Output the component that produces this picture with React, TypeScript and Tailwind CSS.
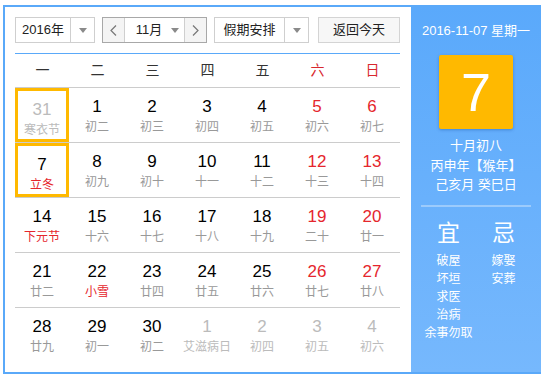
const font = "font-['Liberation_Sans','Noto_Sans_CJK_SC',sans-serif]";

type Day = { n: number; l: string; out?: boolean; fest?: boolean; sel?: boolean };

const rows: Day[][] = [
  [
    { n: 31, l: "寒衣节", out: true, sel: true },
    { n: 1, l: "初二" },
    { n: 2, l: "初三" },
    { n: 3, l: "初四" },
    { n: 4, l: "初五" },
    { n: 5, l: "初六" },
    { n: 6, l: "初七" },
  ],
  [
    { n: 7, l: "立冬", fest: true, sel: true },
    { n: 8, l: "初九" },
    { n: 9, l: "初十" },
    { n: 10, l: "十一" },
    { n: 11, l: "十二" },
    { n: 12, l: "十三" },
    { n: 13, l: "十四" },
  ],
  [
    { n: 14, l: "下元节", fest: true },
    { n: 15, l: "十六" },
    { n: 16, l: "十七" },
    { n: 17, l: "十八" },
    { n: 18, l: "十九" },
    { n: 19, l: "二十" },
    { n: 20, l: "廿一" },
  ],
  [
    { n: 21, l: "廿二" },
    { n: 22, l: "小雪", fest: true },
    { n: 23, l: "廿四" },
    { n: 24, l: "廿五" },
    { n: 25, l: "廿六" },
    { n: 26, l: "廿七" },
    { n: 27, l: "廿八" },
  ],
  [
    { n: 28, l: "廿九" },
    { n: 29, l: "初一" },
    { n: 30, l: "初二" },
    { n: 1, l: "艾滋病日", out: true },
    { n: 2, l: "初四", out: true },
    { n: 3, l: "初五", out: true },
    { n: 4, l: "初六", out: true },
  ],
];

const weekdays = ["一", "二", "三", "四", "五", "六", "日"];

function Arrow() {
  return <span className="w-0 h-0 border-l-[4px] border-r-[4px] border-t-[5px] border-l-transparent border-r-transparent border-t-[#8a8a8a]" />;
}

function Controls() {
  return (
    <div className="flex h-[26px] text-[13px] text-[#222]">
      <div className="flex w-[80px] border border-[#cfcfcf] bg-white">
        <div className="flex-1 flex items-center justify-center">2016年</div>
        <div className="w-[24px] border-l border-[#cfcfcf] flex items-center justify-center">
          <Arrow />
        </div>
      </div>
      <div className="ml-[7px] flex w-[105px] border border-[#a8a8a8] bg-white">
        <div className="w-[22px] bg-[#f4f4f4] border-r border-[#cfcfcf] flex items-center justify-center text-[#777]">
          <svg width="7" height="11" viewBox="0 0 7 11"><path d="M6 0.5 L1 5.5 L6 10.5" fill="none" stroke="#777" strokeWidth="1.2" /></svg>
        </div>
        <div className="flex-1 flex items-center justify-center gap-[9px] pl-[6px]">
          <span>11月</span>
          <Arrow />
        </div>
        <div className="w-[22px] bg-[#f4f4f4] border-l border-[#cfcfcf] flex items-center justify-center">
          <svg width="7" height="11" viewBox="0 0 7 11"><path d="M1 0.5 L6 5.5 L1 10.5" fill="none" stroke="#777" strokeWidth="1.2" /></svg>
        </div>
      </div>
      <div className="ml-[7px] flex w-[95px] border border-[#cfcfcf] bg-white">
        <div className="flex-1 flex items-center justify-center">假期安排</div>
        <div className="w-[24px] border-l border-[#cfcfcf] flex items-center justify-center">
          <Arrow />
        </div>
      </div>
      <div className="ml-[9px] w-[82px] border border-[#d4d4d4] bg-[#f7f7f7] flex items-center justify-center">
        返回今天
      </div>
    </div>
  );
}

function Cell({ d, col, last }: { d: Day; col: number; last: boolean }) {
  const weekend = col >= 5;
  const numColor = d.out ? "text-[#bbbbbb]" : weekend ? "text-[#e5262d]" : "text-black";
  const lunColor = d.out ? "text-[#bbbbbb]" : d.fest ? "text-[#e5262d]" : "text-[#999999]";
  return (
    <div className={`h-[55px] ${last ? "" : "border-b border-[#cccccc]"}`}>
      <div
        className={`h-[54px] w-[54px] flex flex-col items-center pt-[9px] ${d.sel ? "border-[3px] border-[#ffb900] pt-[6px]" : ""}`}
      >
        <div className={`text-[17px] leading-[20px] ${numColor}`}>{d.n}</div>
        <div className={`text-[12px] leading-[16px] mt-[2px] whitespace-nowrap ${lunColor}`}>{d.l}</div>
      </div>
    </div>
  );
}

function Calendar() {
  return (
    <div className="flex-1 pl-[10px] pr-[11px] pt-[10px]">
      <Controls />
      <div className="mt-[10px] w-[385px] border-t border-[#5aa9f9]">
        <div className="grid grid-cols-7 h-[34px] border-b border-[#cccccc] text-[14px]">
          {weekdays.map((w, i) => (
            <div key={w} className={`flex items-center justify-center ${i >= 5 ? "text-[#d8282e]" : "text-[#333333]"}`}>
              {w}
            </div>
          ))}
        </div>
        {rows.map((r, ri) => (
          <div key={ri} className="grid grid-cols-7">
            {r.map((d, ci) => (
              <Cell key={ci} d={d} col={ci} last={ri === rows.length - 1} />
            ))}
          </div>
        ))}
      </div>
    </div>
  );
}

function Panel() {
  return (
    <div className="w-[130px] bg-gradient-to-b from-[#5aa9fb] to-[#76b8fd] text-white flex flex-col items-center">
      <div className="mt-[16px] text-[13px] leading-[16px] whitespace-nowrap">2016-11-07 星期一</div>
      <div className="mt-[16px] w-[74px] h-[74px] bg-[#ffb900] rounded-[2px] shadow-[0_1px_3px_rgba(0,60,140,0.35)] flex items-center justify-center text-[54px] leading-none">
        7
      </div>
      <div className="mt-[7px] text-[13px] leading-[19.5px] text-center">
        <div>十月初八</div>
        <div>丙申年【猴年】</div>
        <div>己亥月 癸巳日</div>
      </div>
      <div className="mt-[10px] w-[110px] h-[2px] bg-[#9ccbfc]" />
      <div className="w-[110px] flex mt-[12px]">
        <div className="w-[55px] flex flex-col items-center">
          <div className="text-[23px] leading-[28px]">宜</div>
          <div className="mt-[5px] text-[12px] leading-[18px] text-center whitespace-nowrap">
            <div>破屋</div>
            <div>坏垣</div>
            <div>求医</div>
            <div>治病</div>
            <div>余事勿取</div>
          </div>
        </div>
        <div className="w-[55px] flex flex-col items-center">
          <div className="text-[23px] leading-[28px]">忌</div>
          <div className="mt-[5px] text-[12px] leading-[18px] text-center">
            <div>嫁娶</div>
            <div>安葬</div>
          </div>
        </div>
      </div>
    </div>
  );
}

export default function App() {
  return (
    <div className={`w-[544px] h-[378px] bg-white pt-[5px] pl-[3px] ${font}`}>
      <div className="w-[538px] h-[369px] flex border-l-2 border-t-2 border-b-2 border-[#5aa9f9] bg-white">
        <Calendar />
        <Panel />
      </div>
    </div>
  );
}
